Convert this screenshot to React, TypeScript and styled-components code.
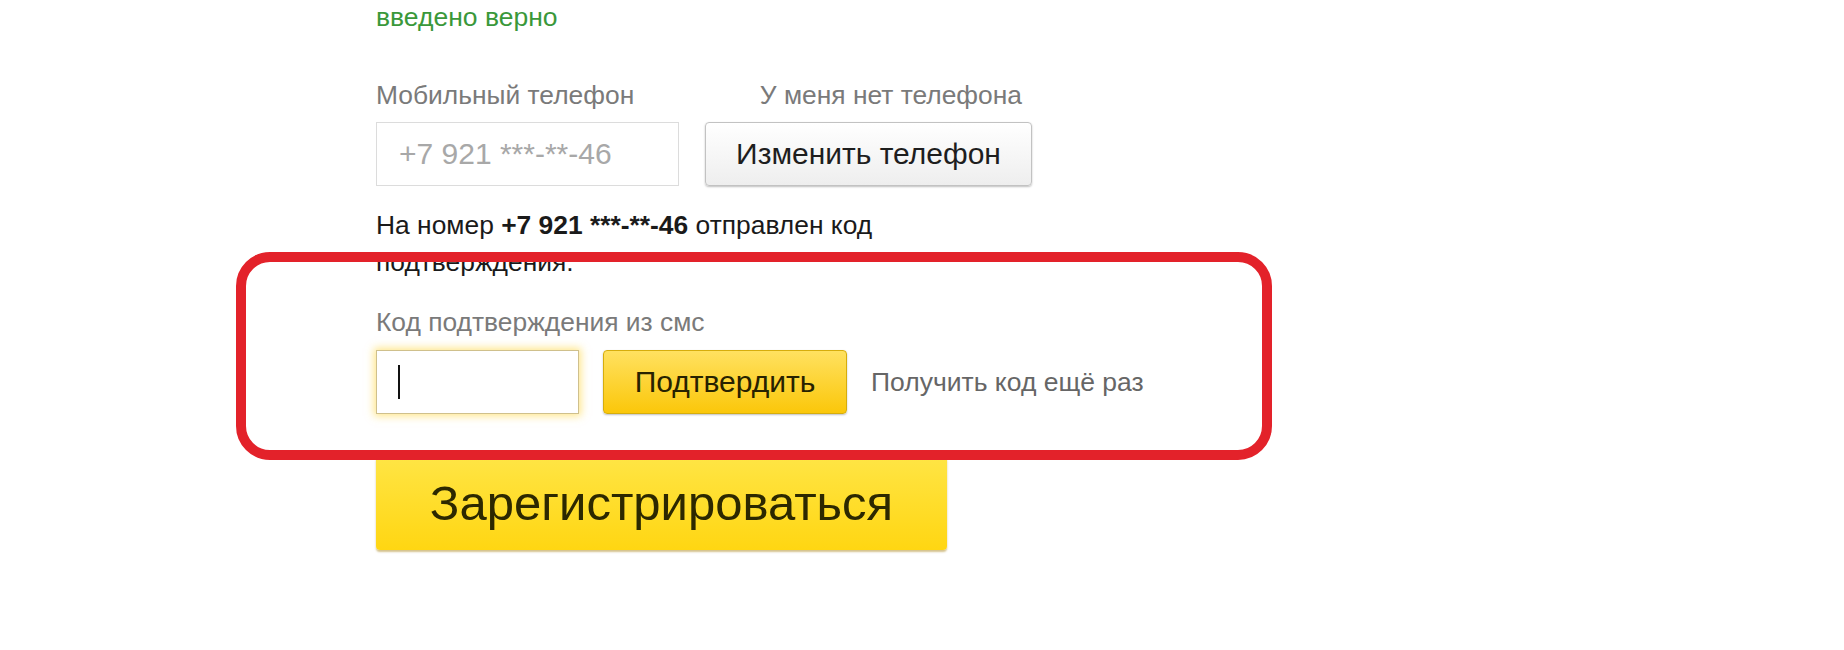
import React from "react";
import styled, {createGlobalStyle, css} from "styled-components";

const GlobalStyle = createGlobalStyle`
    html, body {
        margin: 0;
        padding: 0;
        background: #FFFFFF;
    }
    body {
        font-family: "Liberation Sans", Arial, sans-serif;
        width: 1844px;
        height: 650px;
        overflow: hidden;
    }
`

const App: React.FC = function () {
    return (
        <Page>
            <GlobalStyle/>
            <Status>введено верно</Status>

            <FieldRow>
                <Field width={303}>
                    <Label>Мобильный телефон</Label>
                    <PhoneInput>+7 921 ***-**-46</PhoneInput>
                </Field>
                <Field width={327}>
                    <Label alignEnd>У меня нет телефона</Label>
                    <Button>Изменить телефон</Button>
                </Field>
            </FieldRow>

            <Message>
                На номер <b>+7 921 ***-**-46</b> отправлен код подтверждения.
            </Message>

            <Label>Код подтверждения из смс</Label>
            <CodeRow>
                <CodeInput><Caret/></CodeInput>
                <Button yellow width={244}>Подтвердить</Button>
                <Resend>Получить код ещё раз</Resend>
            </CodeRow>

            <RegisterButton>Зарегистрироваться</RegisterButton>

            <Highlight/>
        </Page>
    )
}

export default App

const Page = styled.main`
    position: relative;
    display: flex;
    flex-direction: column;
    align-items: flex-start;
    padding: 2px 0 0 376px;
    height: 650px;
    box-sizing: border-box;
    font-size: 26px;
    line-height: 30px;
`
const Status = styled.div`
    color: #3a983a;
    font-size: 26.5px;
    line-height: 30px;
`
const FieldRow = styled.div`
    display: flex;
    gap: 26px;
    margin-top: 48px;
`
const Field = styled.div<{width: number}>`
    display: flex;
    flex-direction: column;
    width: ${props => props.width}px;
`
const Label = styled.div<{alignEnd?: boolean}>`
    color: #7a7a7a;
    font-size: 26.4px;
    line-height: 30px;
    margin-bottom: 12px;

    ${props => props.alignEnd && css`
        align-self: flex-end;
        padding-right: 10px;
    `}
`
const PhoneInput = styled.div`
    display: flex;
    align-items: center;
    height: 64px;
    padding-left: 22px;
    box-sizing: border-box;
    border: 1px solid #dcdcdc;
    background: #FFFFFF;
    color: #a8a8a8;
    font-size: 30px;
`
const Button = styled.button<{yellow?: boolean, width?: number}>`
    height: 64px;
    width: ${props => props.width ? `${props.width}px` : "100%"};
    border-radius: 4px;
    border: 1px solid #c2c2c2;
    background: linear-gradient(#ffffff, #eeeeee);
    box-shadow: 0 1px 2px rgba(0, 0, 0, 0.25);
    color: #1e1e1e;
    font-family: "Liberation Sans", Arial, sans-serif;
    font-size: 30px;
    padding: 0;

    ${props => props.yellow && css`
        border: 1px solid #d6ad0c;
        background: linear-gradient(#ffe160, #fbc70a);
        color: #272200;
    `}
`
const Message = styled.p`
    width: 520px;
    margin: 21px 0 26px;
    color: #1a1a1a;
    font-size: 26.4px;
    line-height: 37px;

    b {
        font-weight: 700;
    }
`
const CodeRow = styled.div`
    display: flex;
    align-items: center;
    gap: 24px;
    margin-top: 1px;
`
const CodeInput = styled.div`
    display: flex;
    align-items: center;
    width: 203px;
    height: 64px;
    padding-left: 21px;
    box-sizing: border-box;
    background: #FFFFFF;
    border: 1px solid #cfc08c;
    box-shadow: 0 0 8px 2px rgba(255, 210, 40, 0.55);
`
const Caret = styled.span`
    width: 2px;
    height: 34px;
    background: #111111;
`
const Resend = styled.span`
    color: #666666;
    font-size: 26.5px;
`
const RegisterButton = styled.button`
    margin-top: 42px;
    width: 571px;
    height: 94px;
    border-radius: 4px;
    border: none;
    background: linear-gradient(#ffe545, #ffd612);
    box-shadow: 0 2px 2px rgba(160, 120, 0, 0.45);
    color: #2c2800;
    font-family: "Liberation Sans", Arial, sans-serif;
    font-size: 49px;
    padding: 0;
`
const Highlight = styled.div`
    position: absolute;
    left: 236px;
    top: 252px;
    width: 1036px;
    height: 208px;
    box-sizing: border-box;
    border: 10px solid #e3222a;
    border-radius: 34px;
    pointer-events: none;
`
